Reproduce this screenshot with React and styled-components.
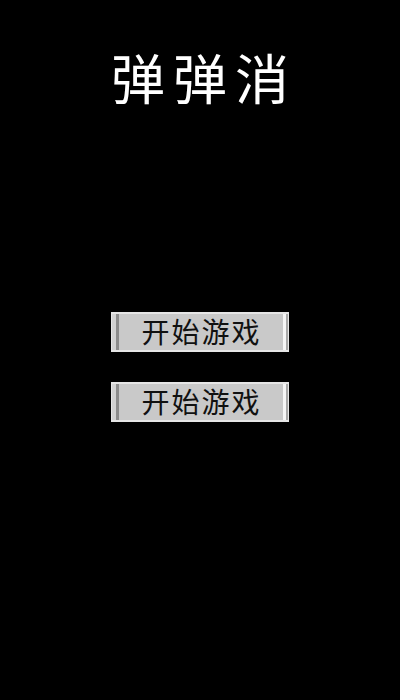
import React from "react";
import styled, { createGlobalStyle } from "styled-components";

const Global = createGlobalStyle`
  html, body { margin: 0; padding: 0; background: #000; }
  body { font-family: "Noto Sans CJK SC", "Noto Sans", sans-serif; }
`;

const Screen = styled.div`
  width: 400px;
  height: 700px;
  background: #000;
  display: flex;
  flex-direction: column;
  align-items: center;
`;

const Title = styled.h1`
  margin: 47px 0 0 0;
  padding-left: 8px;
  font-size: 54px;
  line-height: 60px;
  font-weight: 400;
  letter-spacing: 8px;
  color: #fff;
`;

const Menu = styled.div`
  margin-top: 205px;
  display: flex;
  flex-direction: column;
  gap: 30px;
`;

const Button = styled.button`
  width: 178px;
  height: 40px;
  padding: 0 0 2px 3px;
  background: #c9c9c9;
  border: 1px solid #e6e6e6;
  border-top-width: 2px;
  border-bottom-width: 2px;
  box-shadow: inset 4px 0 0 #d2d2d2, inset 7px 0 0 #8c8c8c,
    inset -2px 0 0 #a9a9a9, inset -5px 0 0 #f6f6f6;
  font-family: "Noto Sans CJK SC", sans-serif;
  font-size: 28px;
  letter-spacing: 2px;
  color: #111;
  line-height: 32px;
  cursor: pointer;
`;

export default function App() {
  return (
    <>
      <Global />
      <Screen>
        <Title>弹弹消</Title>
        <Menu>
          <Button>开始游戏</Button>
          <Button>开始游戏</Button>
        </Menu>
      </Screen>
    </>
  );
}
